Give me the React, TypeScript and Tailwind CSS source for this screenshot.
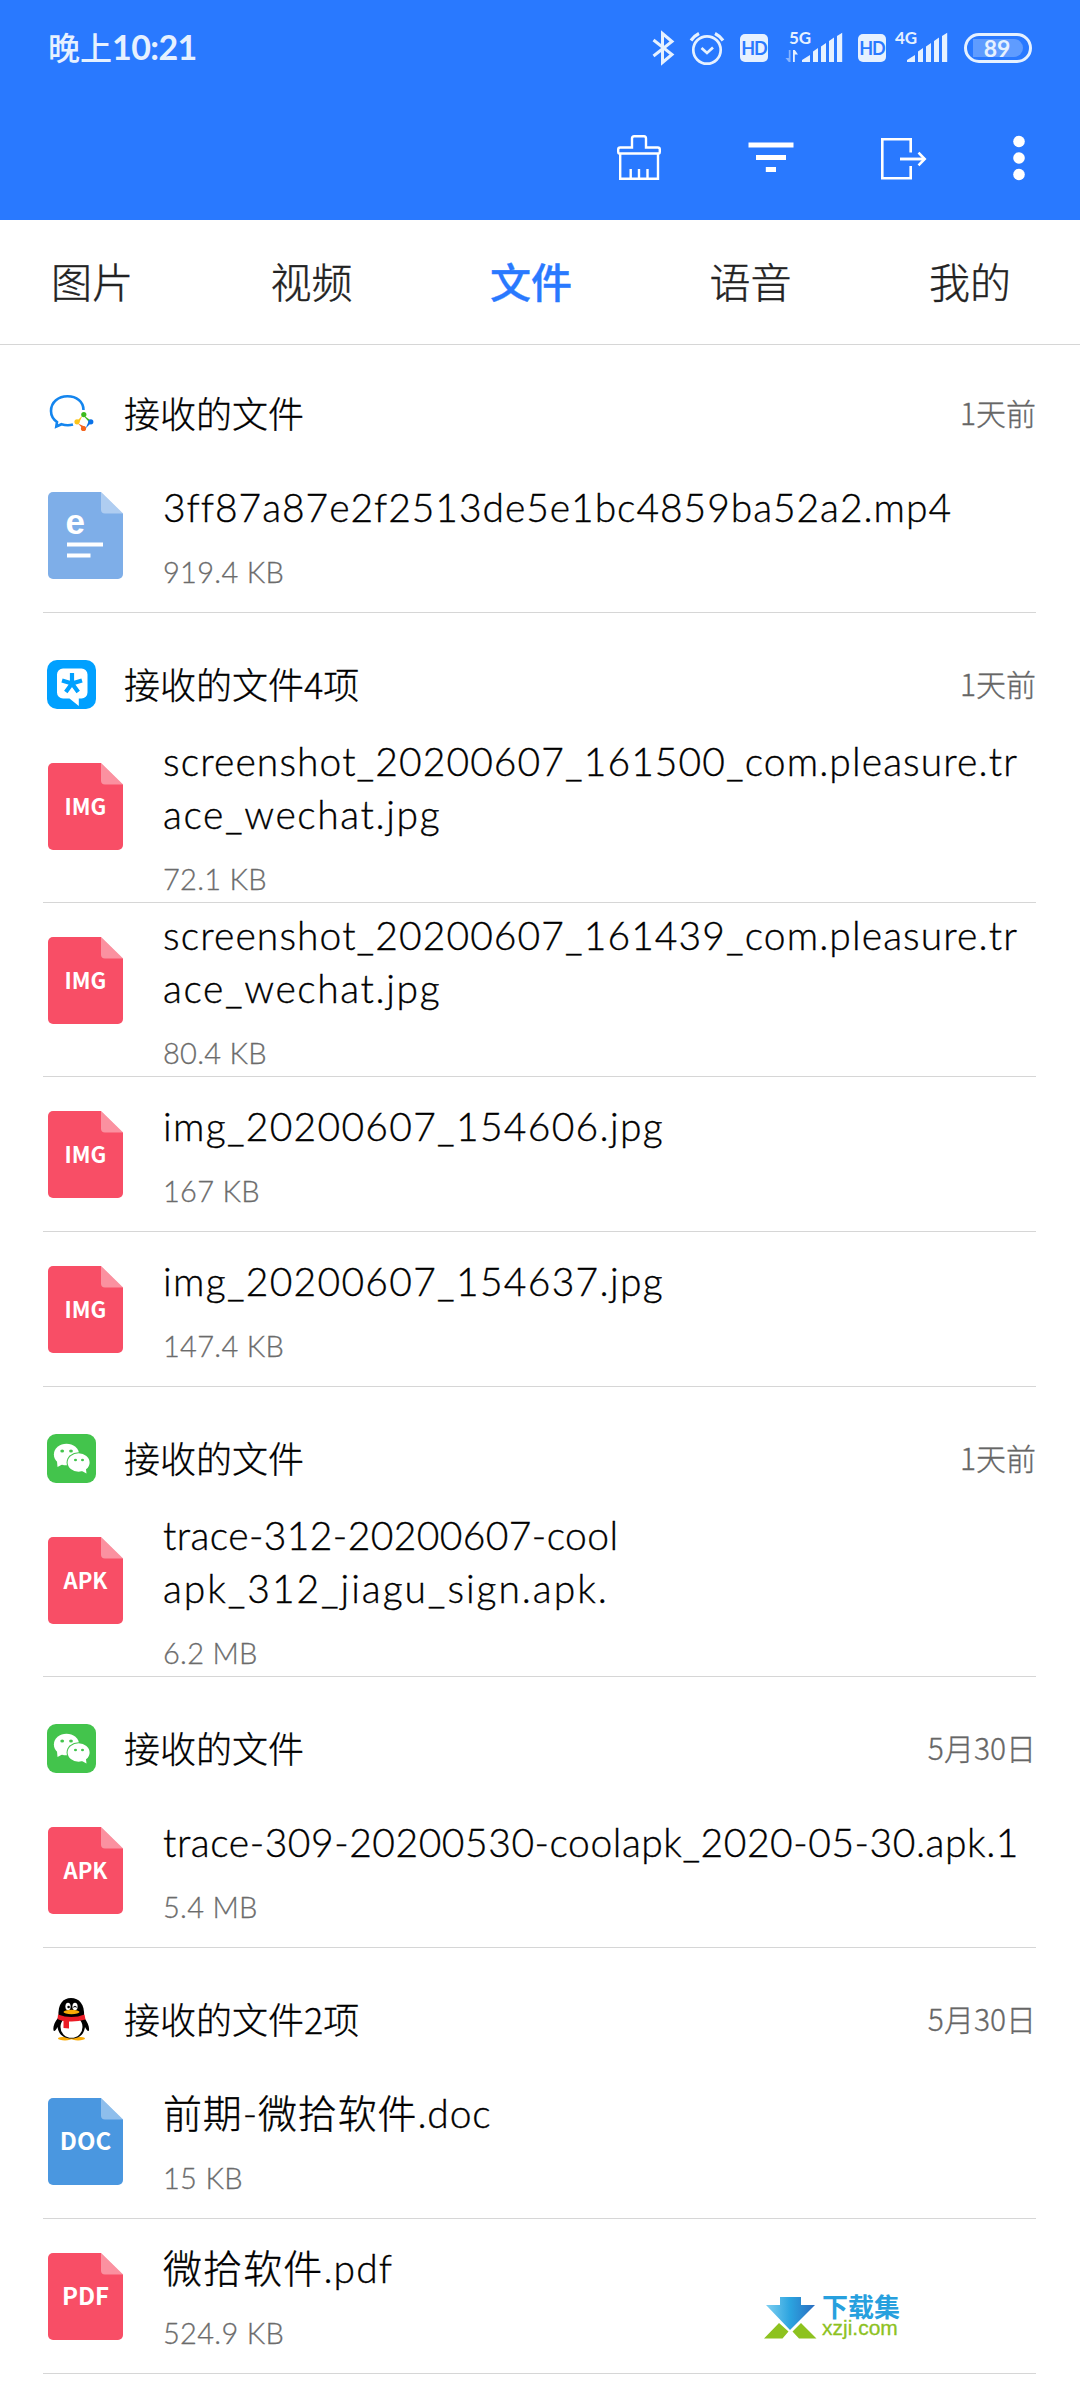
import type { ReactNode } from 'react';

type FileKind = 'MP4' | 'IMG' | 'APK' | 'DOC' | 'PDF';
type AppKind = 'wework' | 'tim' | 'wechat' | 'qq';

interface FileItem {
  kind: FileKind;
  lines: { text: string; tracking: string }[];
  size: string;
}

interface Group {
  app: AppKind;
  title: string;
  time: string;
  files: FileItem[];
}

const tabs = ['图片', '视频', '文件', '语音', '我的'];

const groups: Group[] = [
  {
    app: 'wework',
    title: '接收的文件',
    time: '1天前',
    files: [
      { kind: 'MP4', lines: [{ text: '3ff87a87e2f2513de5e1bc4859ba52a2.mp4', tracking: 'tracking-[0.95px]' }], size: '919.4 KB' },
    ],
  },
  {
    app: 'tim',
    title: '接收的文件4项',
    time: '1天前',
    files: [
      {
        kind: 'IMG',
        lines: [
          { text: 'screenshot_20200607_161500_com.pleasure.tr', tracking: 'tracking-[1.1px]' },
          { text: 'ace_wechat.jpg', tracking: 'tracking-[1.6px]' },
        ],
        size: '72.1 KB',
      },
      {
        kind: 'IMG',
        lines: [
          { text: 'screenshot_20200607_161439_com.pleasure.tr', tracking: 'tracking-[1.1px]' },
          { text: 'ace_wechat.jpg', tracking: 'tracking-[1.6px]' },
        ],
        size: '80.4 KB',
      },
      { kind: 'IMG', lines: [{ text: 'img_20200607_154606.jpg', tracking: 'tracking-[1.3px]' }], size: '167 KB' },
      { kind: 'IMG', lines: [{ text: 'img_20200607_154637.jpg', tracking: 'tracking-[1.3px]' }], size: '147.4 KB' },
    ],
  },
  {
    app: 'wechat',
    title: '接收的文件',
    time: '1天前',
    files: [
      {
        kind: 'APK',
        lines: [
          { text: 'trace-312-20200607-cool', tracking: 'tracking-[0.4px]' },
          { text: 'apk_312_jiagu_sign.apk.', tracking: 'tracking-[1.95px]' },
        ],
        size: '6.2 MB',
      },
    ],
  },
  {
    app: 'wechat',
    title: '接收的文件',
    time: '5月30日',
    files: [
      { kind: 'APK', lines: [{ text: 'trace-309-20200530-coolapk_2020-05-30.apk.1', tracking: 'tracking-[0.55px]' }], size: '5.4 MB' },
    ],
  },
  {
    app: 'qq',
    title: '接收的文件2项',
    time: '5月30日',
    files: [
      { kind: 'DOC', lines: [{ text: '前期-微拾软件.doc', tracking: 'tracking-[0.85px]' }], size: '15 KB' },
      { kind: 'PDF', lines: [{ text: '微拾软件.pdf', tracking: 'tracking-[1.1px]' }], size: '524.9 KB' },
    ],
  },
];

const fileColors: Record<FileKind, string> = {
  MP4: '#7eaee8',
  IMG: '#f84e66',
  APK: '#f84e66',
  DOC: '#4a97e0',
  PDF: '#f84e66',
};

function FileIcon({ kind }: { kind: FileKind }) {
  return (
    <svg width="75" height="87" viewBox="0 0 75 87" className="mt-[34px] shrink-0">
      <path d="M5 0H53L75 21.5V82a5 5 0 0 1-5 5H5a5 5 0 0 1-5-5V5a5 5 0 0 1 5-5Z" fill={fileColors[kind]} />
      <path d="M53 0L75 21.5H57a4 4 0 0 1-4-4Z" fill="#fff" fillOpacity="0.38" />
      {kind === 'MP4' ? (
        <>
          <text x="17.5" y="42" fontSize="35" fontWeight="700" fill="#fff" className="font-['Liberation_Sans',sans-serif]">e</text>
          <path d="M19 50.5H55V54.5H19ZM19 61.5H42.5V65.5H19Z" fill="#fff" />
        </>
      ) : (
        <text
          x="37.5"
          y="52"
          textAnchor="middle"
          fontSize={kind === 'IMG' || kind === 'APK' ? 22 : 24}
          fontWeight="700"
          fill="#fff"
          className="font-['Noto_Sans_CJK_SC',sans-serif]"
        >
          {kind}
        </text>
      )}
    </svg>
  );
}

const appIcons: Record<AppKind, ReactNode> = {
  wework: (
    <>
      <path d="M36.5 21C36.5 12.5 29.5 7.2 20.5 7.2S4 13 4 22C4 27 6.5 30.5 10 33L9.3 37.5L14.5 35.2C18 36.3 22.5 36.5 26 35.5" fill="none" stroke="#1485ee" strokeWidth="2.6" />
      <path d="M35 25L43 31L45 33L41.5 32.5Z" fill="#3dbb1e" />
      <path d="M45 33L38.5 39.5L42 31.5Z" fill="#0a72e8" />
      <path d="M37 41L31 34.5L38.5 38Z" fill="#f4641e" />
      <path d="M29 33L35.5 26.5L32 34Z" fill="#fcc419" />
      <circle cx="36.8" cy="25.6" r="2.6" fill="#3dbb1e" />
      <circle cx="43.8" cy="32.8" r="2.6" fill="#0a72e8" />
      <circle cx="36.5" cy="39.5" r="2.6" fill="#f4641e" />
      <circle cx="30" cy="32.8" r="2.6" fill="#fcc419" />
    </>
  ),
  tim: (
    <>
      <rect width="49" height="49" rx="10" fill="#00a0ff" />
      <path d="M16 8.5H34.5A6 6 0 0 1 40.5 14.5V32.5A6 6 0 0 1 34.5 38.5H31.8V46L22.5 38.5H16A6 6 0 0 1 10 32.5V14.5A6 6 0 0 1 16 8.5Z" fill="#fff" />
      <path d="M25 23.5V13M25 23.5L15 20.5M25 23.5L35 20.5M25 23.5L18.8 32M25 23.5L31.2 32" stroke="#00a0ff" strokeWidth="4.2" />
    </>
  ),
  wechat: (
    <>
      <rect width="49" height="49" rx="9" fill="#43c44c" />
      <path d="M10 27L10.5 33L17 29.5Z" fill="#fff" />
      <ellipse cx="19.5" cy="20.5" rx="12.6" ry="10.8" fill="#fff" />
      <ellipse cx="31.6" cy="28.5" rx="12" ry="10.3" fill="#43c44c" />
      <ellipse cx="31.6" cy="28.5" rx="11" ry="9.3" fill="#fff" />
      <path d="M34 36.5L39.5 39.5L38.8 34Z" fill="#fff" />
      <g fill="#43c44c">
        <ellipse cx="15.2" cy="17" rx="1.9" ry="1.5" />
        <ellipse cx="24" cy="17" rx="1.9" ry="1.5" />
        <ellipse cx="28.5" cy="26" rx="1.5" ry="1.3" />
        <ellipse cx="35.5" cy="26" rx="1.5" ry="1.3" />
      </g>
    </>
  ),
  qq: (
    <>
      <ellipse cx="18" cy="43.6" rx="7" ry="1.8" fill="#faab07" />
      <ellipse cx="31" cy="43.6" rx="7" ry="1.8" fill="#faab07" />
      <path d="M11 23C7 28 5.5 33 6.8 36C8 36.5 9.5 34 10.5 32C11.5 39 16 43.5 24.5 43.5S37 39 38 32C39 34 40.5 36.5 41.7 36C43 33 41 28 37.5 23Z" fill="#000" />
      <ellipse cx="24.5" cy="32" rx="11" ry="10.8" fill="#fff" />
      <path d="M11.5 22C10.5 9 16 3 24 3S38 9 37 22Z" fill="#000" />
      <ellipse cx="21" cy="11.5" rx="2.6" ry="3.8" fill="#fff" />
      <ellipse cx="28" cy="11.5" rx="2.6" ry="3.8" fill="#fff" />
      <circle cx="21.6" cy="12" r="1.3" fill="#000" />
      <path d="M26.5 12.5Q28 10 29.5 12.5" fill="none" stroke="#000" strokeWidth="1.2" />
      <ellipse cx="24.5" cy="17" rx="8" ry="2.2" fill="#faab07" />
      <path d="M11 19.5Q24.5 24.5 37.5 19.5L38.5 24.5Q30 27 22 26.5V33.5L16.5 33V26Q12 25 10.5 24Z" fill="#eb1c26" />
    </>
  ),
};

function AppIcon({ app }: { app: AppKind }) {
  return (
    <svg width="49" height="49" viewBox="0 0 49 49" className="shrink-0">
      {appIcons[app]}
    </svg>
  );
}

function HdBadge() {
  return (
    <span className="flex h-7 w-7 items-center justify-center rounded-[5px] bg-[#e6f1ff] font-['Lato',sans-serif] text-[18px] leading-none font-bold tracking-[-1px] text-[#2979ff]">
      HD
    </span>
  );
}

function Signal({ label, arrows }: { label: string; arrows?: boolean }) {
  return (
    <svg width="58" height="36" viewBox="0 0 58 36" fill="#e6f1ff" className="overflow-visible">
      <text x={arrows ? 4 : 5} y="13.5" fontSize="17" fontWeight="700" className="font-['Lato',sans-serif]">{label}</text>
      {arrows && (
        <>
          <path d="M5.5 20V32H3.8L0.5 28H3.8V20Z" opacity="0.5" />
          <path d="M8 32V20H9.8L13 24.5H9.8V32Z" />
        </>
      )}
      <path d="M17 32V30L25 25V32ZM28 32V21.5L33 18V32ZM36 32V16.5L41 13V32ZM44 32V11L49 7.5V32ZM52 32V6L57.2 2.8V32Z" />
    </svg>
  );
}

function StatusBar() {
  return (
    <div className="flex h-24 items-center pr-12 pl-12 text-[#e6f1ff]">
      <span className="-mt-[2px] flex-1 font-['Noto_Sans_CJK_SC',sans-serif] text-[32px] leading-none font-medium">
        晚上<span className="font-['Lato',sans-serif] text-[34px] font-bold tracking-[-0.6px]">10:21</span>
      </span>
      <svg width="24" height="36" viewBox="0 0 22 36" fill="none" stroke="#e6f1ff" strokeWidth="3">
        <path d="M1.5 10L20 24.5L10.5 32.5V3.5L20 11.5L1.5 26" />
      </svg>
      <svg width="36" height="36" viewBox="0 0 36 36" fill="none" stroke="#e6f1ff" strokeWidth="2.7" className="ml-[14px]">
        <circle cx="18" cy="20" r="13.7" />
        <path d="M12.5 18L18 23L24 17.5" />
        <path d="M2 10.5Q5 6 10 3.5M26 3.5Q31 6 34 10.5" strokeWidth="3.2" />
      </svg>
      <div className="ml-[15px]"><HdBadge /></div>
      <div className="ml-[17px]"><Signal label="5G" arrows /></div>
      <div className="ml-[15px]"><HdBadge /></div>
      <div className="ml-[4px]"><Signal label="4G" /></div>
      <div className="ml-4 flex h-[30px] w-[68px] items-center justify-center rounded-full border-[3px] border-[#e6f1ff]">
        <span className="flex h-[18px] w-[50px] items-center justify-center rounded-l-[3px] rounded-r-full bg-[#5f9cff] pr-0.5 font-['Lato',sans-serif] text-[23px] leading-none font-bold">
          89
        </span>
      </div>
    </div>
  );
}

function Toolbar() {
  return (
    <div className="flex h-[124px] items-center pl-[617px]">
      <svg width="44" height="46" viewBox="0 0 44 46" fill="none" stroke="#fff" strokeWidth="2.4">
        <path d="M3.2 18.5V43.8H41V18.5" />
        <path d="M2 18.5Q1.2 18.5 1.2 17V14.5Q1.2 12.5 3.2 12.5H15V3.5Q15 1.2 17.2 1.2H27Q29 1.2 29 3.5V12.5H40.8Q42.8 12.5 42.8 14.5V17Q42.8 18.5 42 18.5Z" />
        <path d="M13.7 43V34M22 43V34M30.5 43V34" />
      </svg>
      <svg width="46" height="46" viewBox="0 0 46 46" className="ml-[87px]" fill="#fff">
        <path d="M0.5 7.5H45.5V12.5H0.5ZM8 20H38V25H8ZM17.8 32H28V37H17.8Z" />
      </svg>
      <svg width="46" height="46" viewBox="0 0 46 46" fill="none" stroke="#fff" strokeWidth="2.6" className="ml-[87px]">
        <path d="M29.7 17.5V4.3H1.3V43.2H29.7V31" />
        <path d="M19 24H43.5" strokeWidth="2.9" />
        <path d="M37.5 17.7L43.7 24L37.5 30.3" />
      </svg>
      <svg width="12" height="46" viewBox="0 0 12 46" fill="#fff" className="ml-[86px]">
        <circle cx="6" cy="6.5" r="5.8" />
        <circle cx="6" cy="23" r="5.8" />
        <circle cx="6" cy="39.5" r="5.8" />
      </svg>
    </div>
  );
}

function FileRow({ file }: { file: FileItem }) {
  const double = file.lines.length > 1;
  return (
    <div className={`flex border-b border-[#d6d6d6] pl-[5px] ${double ? 'h-[174px]' : 'h-[155px]'}`}>
      <FileIcon kind={file.kind} />
      <div className={`ml-10 font-['Lato','Noto_Sans_CJK_SC',sans-serif] font-light whitespace-nowrap ${double ? 'pt-1.5' : 'pt-[23px]'}`}>
        {file.lines.map((line) => (
          <div key={line.text} className={`text-[39px] leading-[53px] text-black [-webkit-text-stroke:0.35px] ${line.tracking}`}>
            {line.text}
          </div>
        ))}
        <div className="mt-[18px] text-[29px] leading-10 tracking-[0.3px] text-[#6b6b6b] [-webkit-text-stroke:0.3px]">{file.size}</div>
      </div>
    </div>
  );
}

function Watermark() {
  return (
    <div className="absolute top-[2296px] left-[764px] flex">
      <svg width="53" height="43" viewBox="0 0 53 43">
        <defs>
          <linearGradient id="arrow" x1="0" y1="0" x2="1" y2="0">
            <stop offset="0" stopColor="#7fd0f2" />
            <stop offset="0.5" stopColor="#2ba3df" />
            <stop offset="1" stopColor="#2a6cc0" />
          </linearGradient>
        </defs>
        <path d="M16 1H37V9H51L26 34L2 9H16Z" fill="url(#arrow)" />
        <path d="M15 27L24.5 35.5L18.5 42.5H0ZM37 27L28.5 35.5L35 42.5H52.5Z" fill="#8dc21f" />
      </svg>
      <div className="-mt-[2px] ml-[5px] flex flex-col">
        <span className="font-['Noto_Sans_CJK_SC',sans-serif] text-[26px] leading-[24px] font-bold text-[#27a0de]">下载集</span>
        <span className="font-['Liberation_Sans',sans-serif] text-[21px] leading-[19px] text-[#8dc21f] [-webkit-text-stroke:0.3px]">xzji.com</span>
      </div>
    </div>
  );
}

export default function App() {
  return (
    <div className="relative h-[2400px] w-[1080px] overflow-hidden bg-white font-['Noto_Sans_CJK_SC',sans-serif]">
      <header className="h-[220px] bg-[#2979ff]">
        <StatusBar />
        <Toolbar />
      </header>

      <nav className="flex h-[125px] items-center gap-[137.5px] border-b border-[#d6d6d6] pb-[3px] pl-[51px]">
        {tabs.map((tab) => (
          <button
            key={tab}
            className={`w-[82px] text-[41px] leading-none whitespace-nowrap ${
              tab === '文件' ? 'font-medium text-[#2979ff] [-webkit-text-stroke:0.4px]' : 'font-light text-[#222] [-webkit-text-stroke:0.4px]'
            }`}
          >
            {tab}
          </button>
        ))}
      </nav>

      <main className="-mt-[3px] pr-11 pl-[43px]">
        {groups.map((group, i) => (
          <section key={i}>
            <div className="flex h-[116px] items-center pt-[27px] pl-1">
              <AppIcon app={group.app} />
              <h2 className="-mt-[3px] ml-7 flex-1 text-[36px] leading-none font-light text-black [-webkit-text-stroke:0.3px]">{group.title}</h2>
              <span className="-mt-[3px] text-[30px] leading-none font-light text-[#666] [-webkit-text-stroke:0.3px]">{group.time}</span>
            </div>
            {group.files.map((file, j) => (
              <FileRow key={j} file={file} />
            ))}
          </section>
        ))}
      </main>

      <Watermark />
    </div>
  );
}
